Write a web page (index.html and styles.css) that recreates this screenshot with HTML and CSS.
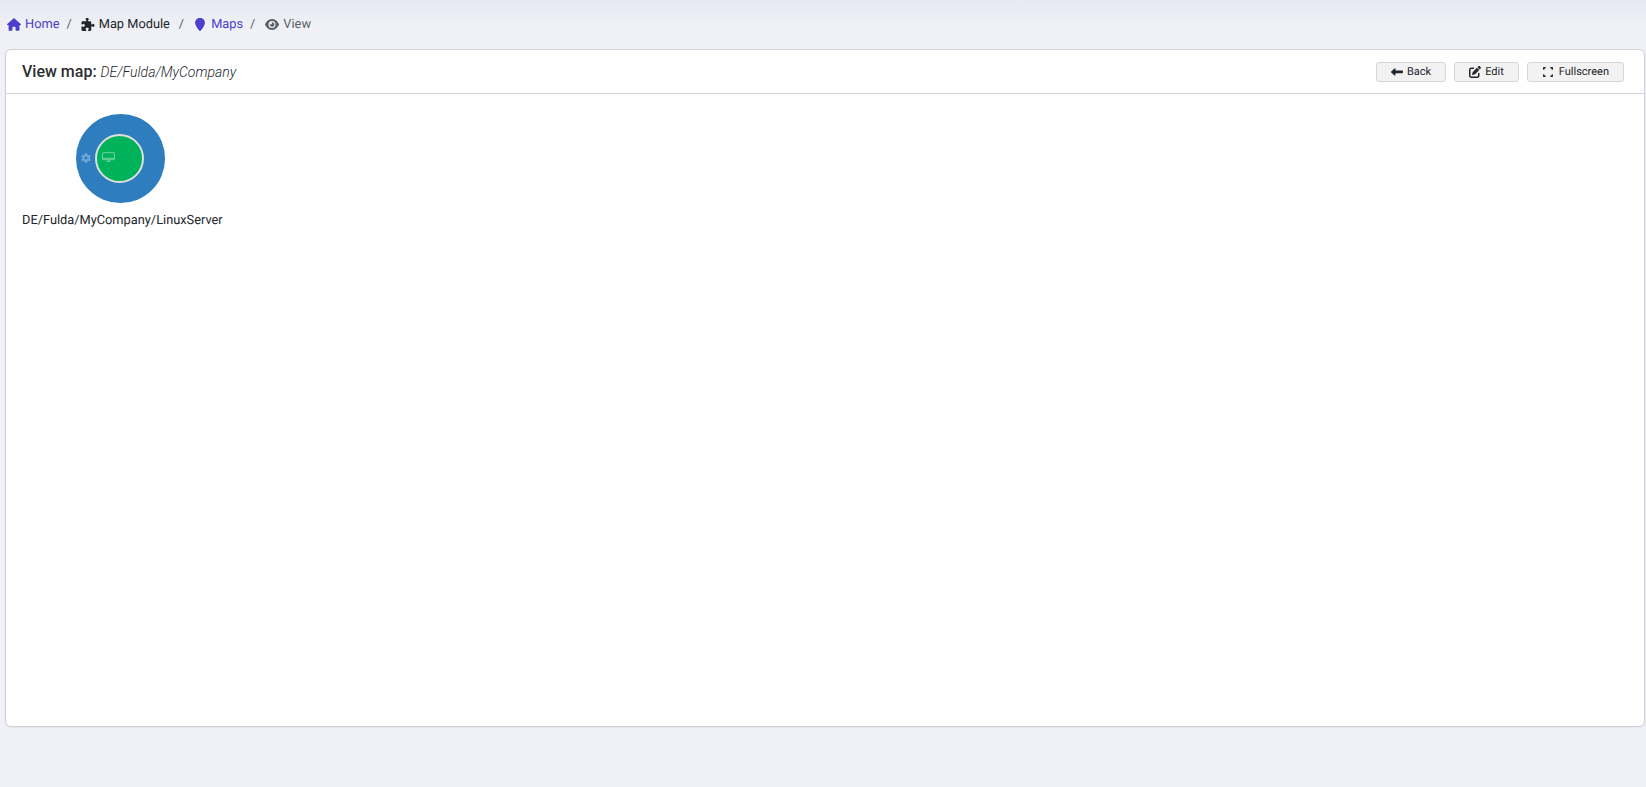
FILE: index.html
```html
<!DOCTYPE html>
<html lang="en">
<head>
  <meta charset="UTF-8" />
  <title>View map</title>
  <link rel="stylesheet" href="styles.css">
</head>
<body>
  <ol class="breadcrumb">
    <li class="crumb link">
      <svg class="icon" viewBox="0 0 576 512"><path d="M575.8 255.5c0 18-15 32.1-32 32.1h-32l.7 160.2c0 2.7-.2 5.4-.5 8.1V472c0 22.1-17.9 40-40 40H456c-1.1 0-2.2 0-3.3-.1c-1.4 .1-2.8 .1-4.2 .1H416 392c-22.1 0-40-17.9-40-40V448 384c0-17.7-14.3-32-32-32H256c-17.7 0-32 14.3-32 32v64 24c0 22.1-17.9 40-40 40H160 128.1c-1.5 0-3-.1-4.5-.2c-1.2 .1-2.4 .2-3.6 .2H104c-22.1 0-40-17.9-40-40V360c0-.9 0-1.9 .1-2.8V287.6H32c-18 0-32-14-32-32.1c0-9 3-17 10-24L266.4 8c7-7 15-8 22-8s15 2 21 7L564.8 231.5c8 7 12 15 11 24z"/></svg>
      Home
    </li>
    <li class="sep">/</li>
    <li class="crumb crumb-module">
      <svg class="icon" viewBox="0 0 512 512"><path d="M192 104.8c0-9.2-5.8-17.3-13.2-22.8C167.2 73.3 160 61.3 160 48c0-26.5 28.7-48 64-48s64 21.5 64 48c0 13.3-7.2 25.3-18.8 34c-7.4 5.5-13.2 13.6-13.2 22.8v0c0 12.8 10.4 23.2 23.2 23.2H336c26.5 0 48 21.5 48 48v56.8c0 12.8 10.4 23.2 23.2 23.2v0c9.2 0 17.3-5.8 22.8-13.2c8.7-11.6 20.7-18.8 34-18.8c26.5 0 48 28.7 48 64s-21.5 64-48 64c-13.3 0-25.3-7.2-34-18.8c-5.5-7.4-13.6-13.2-22.8-13.2v0c-12.8 0-23.2 10.4-23.2 23.2V464c0 26.5-21.5 48-48 48H279.2c-12.8 0-23.2-10.4-23.2-23.2v0c0-9.2 5.8-17.3 13.2-22.8c11.6-8.7 18.8-20.7 18.8-34c0-26.5-28.7-48-64-48s-64 21.5-64 48c0 13.3 7.2 25.3 18.8 34c7.4 5.5 13.2 13.6 13.2 22.8v0c0 12.8-10.4 23.2-23.2 23.2H48c-26.5 0-48-21.5-48-48V343.2C0 330.4 10.4 320 23.2 320v0c9.2 0 17.3 5.8 22.8 13.2C54.7 344.8 66.7 352 80 352c26.5 0 48-28.7 48-64s-21.5-64-48-64c-13.3 0-25.3 7.2-34 18.8C40.5 250.2 32.4 256 23.2 256v0C10.4 256 0 245.6 0 232.8V176c0-26.5 21.5-48 48-48H168.8c12.8 0 23.2-10.4 23.2-23.2v0z"/></svg>
      Map Module
    </li>
    <li class="sep">/</li>
    <li class="crumb link">
      <svg class="icon icon-pin" viewBox="0 0 384 512"><path d="M192 0C86 0 0 80 0 186c0 120 130 270 170 316 12 13 32 13 44 0 40-46 170-196 170-316C384 80 298 0 192 0z"/></svg>
      Maps
    </li>
    <li class="sep">/</li>
    <li class="crumb muted">
      <svg class="icon" viewBox="0 0 576 512"><path d="M288 32c-80.8 0-145.5 36.8-192.6 80.6C48.6 156 17.3 208 2.5 243.7c-3.3 7.9-3.3 16.7 0 24.6C17.3 304 48.6 356 95.4 399.4C142.5 443.2 207.2 480 288 480s145.5-36.8 192.6-80.6c46.8-43.5 78.1-95.4 93-131.1c3.3-7.9 3.3-16.7 0-24.6c-14.9-35.7-46.2-87.7-93-131.1C433.5 68.8 368.8 32 288 32zM144 256a144 144 0 1 1 288 0 144 144 0 1 1 -288 0zm144-64c0 35.3-28.7 64-64 64c-7.1 0-13.9-1.2-20.3-3.3c-5.5-1.8-11.9 1.6-11.7 7.4c.3 6.9 1.3 13.8 3.2 20.7c13.7 51.2 66.4 81.6 117.6 67.9s81.6-66.4 67.9-117.6c-11.1-41.5-47.8-69.4-88.6-71.1c-5.8-.2-9.2 6.1-7.4 11.7c2.1 6.4 3.3 13.2 3.3 20.3z"/></svg>
      View
    </li>
  </ol>

  <div class="card">
    <div class="card-header">
      <h5 class="card-title">View map: <span class="map-name">DE/Fulda/MyCompany</span></h5>
      <div class="actions">
        <button class="btn">
          <svg class="btn-icon" viewBox="0 0 512 512"><path d="M177.5 414c-8.8 3.8-19 2-26-4.6l-144-136C2.7 268.9 0 262.6 0 256s2.7-12.9 7.5-17.4l144-136c7-6.6 17.2-8.4 26-4.6s14.5 12.5 14.5 22l0 72 288 0c17.7 0 32 14.3 32 32l0 48c0 17.7-14.3 32-32 32l-288 0 0 72c0 9.6-5.7 18.2-14.5 22z"/></svg>
          Back
        </button>
        <button class="btn">
          <svg class="btn-icon" viewBox="0 0 512 512"><path d="M471.6 21.7c-21.9-21.9-57.3-21.9-79.2 0L362.3 51.7l97.9 97.9 30.1-30.1c21.9-21.9 21.9-57.3 0-79.2L471.6 21.7zm-299.2 220c-6.1 6.1-10.8 13.6-13.5 21.9l-29.6 88.8c-2.9 8.6-.6 18.1 5.8 24.6s15.9 8.7 24.6 5.8l88.8-29.6c8.2-2.7 15.7-7.4 21.9-13.5L437.7 172.3 339.7 74.3 172.4 241.7zM96 64C43 64 0 107 0 160V416c0 53 43 96 96 96H352c53 0 96-43 96-96V320c0-17.7-14.3-32-32-32s-32 14.3-32 32v96c0 17.7-14.3 32-32 32H96c-17.7 0-32-14.3-32-32V160c0-17.7 14.3-32 32-32h96c17.7 0 32-14.3 32-32s-14.3-32-32-32H96z"/></svg>
          Edit
        </button>
        <button class="btn">
          <svg class="btn-icon btn-icon-expand" viewBox="0 0 448 512"><path d="M32 32C14.3 32 0 46.3 0 64v64c0 17.7 14.3 32 32 32s32-14.3 32-32V96h32c17.7 0 32-14.3 32-32s-14.3-32-32-32H32zM64 384c0-17.7-14.3-32-32-32s-32 14.3-32 32v64c0 17.7 14.3 32 32 32h64c17.7 0 32-14.3 32-32s-14.3-32-32-32H64V384zM352 32c-17.7 0-32 14.3-32 32s14.3 32 32 32h32v32c0 17.7 14.3 32 32 32s32-14.3 32-32V64c0-17.7-14.3-32-32-32H352zM448 384c0-17.7-14.3-32-32-32s-32 14.3-32 32v32H352c-17.7 0-32 14.3-32 32s14.3 32 32 32h64c17.7 0 32-14.3 32-32V384z"/></svg>
          Fullscreen
        </button>
      </div>
    </div>

    <div class="map-canvas">
      <div class="map-item">
        <div class="status-outer">
          <svg class="cog" viewBox="0 0 512 512"><path d="M487.4 315.7l-42.6-24.6c4.3-23.2 4.3-47 0-70.2l42.6-24.6c4.9-2.8 7.1-8.6 5.5-14-11.1-35.6-30-67.8-54.7-94.6-3.8-4.1-10-5.1-14.8-2.3L380.8 110c-17.9-15.4-38.5-27.3-60.8-35.1V25.8c0-5.6-3.9-10.5-9.4-11.7-36.7-8.2-74.3-7.8-109.2 0-5.5 1.2-9.4 6.1-9.4 11.7V75c-22.2 7.9-42.8 19.8-60.8 35.1L88.7 85.5c-4.9-2.8-11-1.9-14.8 2.3-24.7 26.7-43.6 58.9-54.7 94.6-1.7 5.4.6 11.2 5.5 14L67.3 221c-4.3 23.2-4.3 47 0 70.2l-42.6 24.6c-4.9 2.8-7.1 8.6-5.5 14 11.1 35.6 30 67.8 54.7 94.6 3.8 4.1 10 5.1 14.8 2.3l42.6-24.6c17.9 15.4 38.5 27.3 60.8 35.1v49.2c0 5.6 3.9 10.5 9.4 11.7 36.7 8.2 74.3 7.8 109.2 0 5.5-1.2 9.4-6.1 9.4-11.7v-49.2c22.2-7.9 42.8-19.8 60.8-35.1l42.6 24.6c4.9 2.8 11 1.9 14.8-2.3 24.7-26.7 43.6-58.9 54.7-94.6 1.5-5.5-.7-11.3-5.6-14.1zM256 336c-44.1 0-80-35.9-80-80s35.9-80 80-80 80 35.9 80 80-35.9 80-80 80z"/></svg>
          <div class="status-inner">
            <svg class="monitor" viewBox="0 0 24 18"><rect x="1" y="1" width="22" height="13" rx="1"/><path d="M1 11.5h22M12 14v3M8 17h8"/></svg>
          </div>
        </div>
        <div class="map-label">DE/Fulda/MyCompany/LinuxServer</div>
      </div>
    </div>
  </div>
</body>
</html>
```

FILE: styles.css
```css
html, body {
  height: 100%;
}
body {
  margin: 0;
  font-family: Roboto, "Liberation Sans", sans-serif;
  font-size: 13px;
  color: #23262c;
  background: #f0f1f6 linear-gradient(to bottom, #e6e9f3 0, #f0f1f6 28px) no-repeat;
  overflow: hidden;
}

.breadcrumb {
  display: flex;
  align-items: center;
  gap: 8px;
  list-style: none;
  margin: 0;
  padding: 13px 0 0 7px;
  height: 35px;
  box-sizing: border-box;
  font-size: 12.8px;
  text-rendering: geometricPrecision;
}
.crumb {
  display: flex;
  align-items: center;
  gap: 4px;
  white-space: nowrap;
}
.crumb-module { margin-right: 2px; }
.link { color: #4c3fc9; }
.muted { color: #5a5f67; }
.muted .icon { margin-left: 1px; }
.sep { color: #5a5f67; margin: 0 1px 0 -1px; }
.icon {
  width: 14px;
  height: 13px;
  fill: currentColor;
}
.icon-pin { width: 10px; margin: 0 2px 0 2px; }

.card {
  margin: 14px 1px 0 5px;
  height: 678px;
  box-sizing: border-box;
  background: #fff;
  border: 1px solid #d0d1d6;
  border-radius: 6px;
  box-shadow: 0 1px 2px rgba(0, 0, 0, .05);
}
.card-header {
  display: flex;
  align-items: center;
  justify-content: space-between;
  height: 44px;
  box-sizing: border-box;
  padding: 0 20px 0 16px;
  border-bottom: 1px solid #d3d4da;
}
.card-title {
  margin: 0;
  font-size: 16px;
  font-weight: 500;
  color: #2a2d33;
}
.map-name {
  font-size: 14px;
  font-weight: 300;
  font-style: italic;
  color: #23262c;
}
.actions {
  display: flex;
  gap: 8px;
}
.btn {
  display: flex;
  align-items: center;
  gap: 4px;
  height: 20px;
  padding: 0 14px;
  font-family: inherit;
  font-size: 11px;
  color: #23262c;
  background: #f2f2f3;
  border: 1px solid #d6d6d9;
  border-radius: 3px;
  text-rendering: geometricPrecision;
}
.btn-icon {
  height: 12px;
  width: 12px;
  fill: currentColor;
}
.btn-icon-expand {
  width: 10px;
  margin: 0 2px 0 1px;
}

.map-canvas {
  position: relative;
  height: 633px;
}
.map-item {
  position: absolute;
  left: 16px;
  top: 20px;
  width: 201px;
}
.status-outer {
  position: relative;
  width: 89.5px;
  height: 89px;
  margin-left: 53.5px;
  border-radius: 50%;
  background: #2e7dbf;
}
.status-inner {
  position: absolute;
  left: 19.5px;
  top: 20px;
  width: 49px;
  height: 49px;
  box-sizing: border-box;
  border: 2px solid #dcdfdc;
  border-radius: 50%;
  background: #00b259;
}
.cog {
  position: absolute;
  left: 5px;
  top: 39px;
  width: 10px;
  height: 10px;
  fill: #6fa6d6;
}
.monitor {
  position: absolute;
  left: 5px;
  top: 15.5px;
  width: 13px;
  height: 10px;
  fill: none;
  stroke: #8adcb0;
  stroke-width: 1.5;
}
.map-label {
  margin-top: 9px;
  font-size: 12.8px;
  line-height: 18px;
  white-space: nowrap;
  color: #23262c;
  text-rendering: geometricPrecision;
}
```
